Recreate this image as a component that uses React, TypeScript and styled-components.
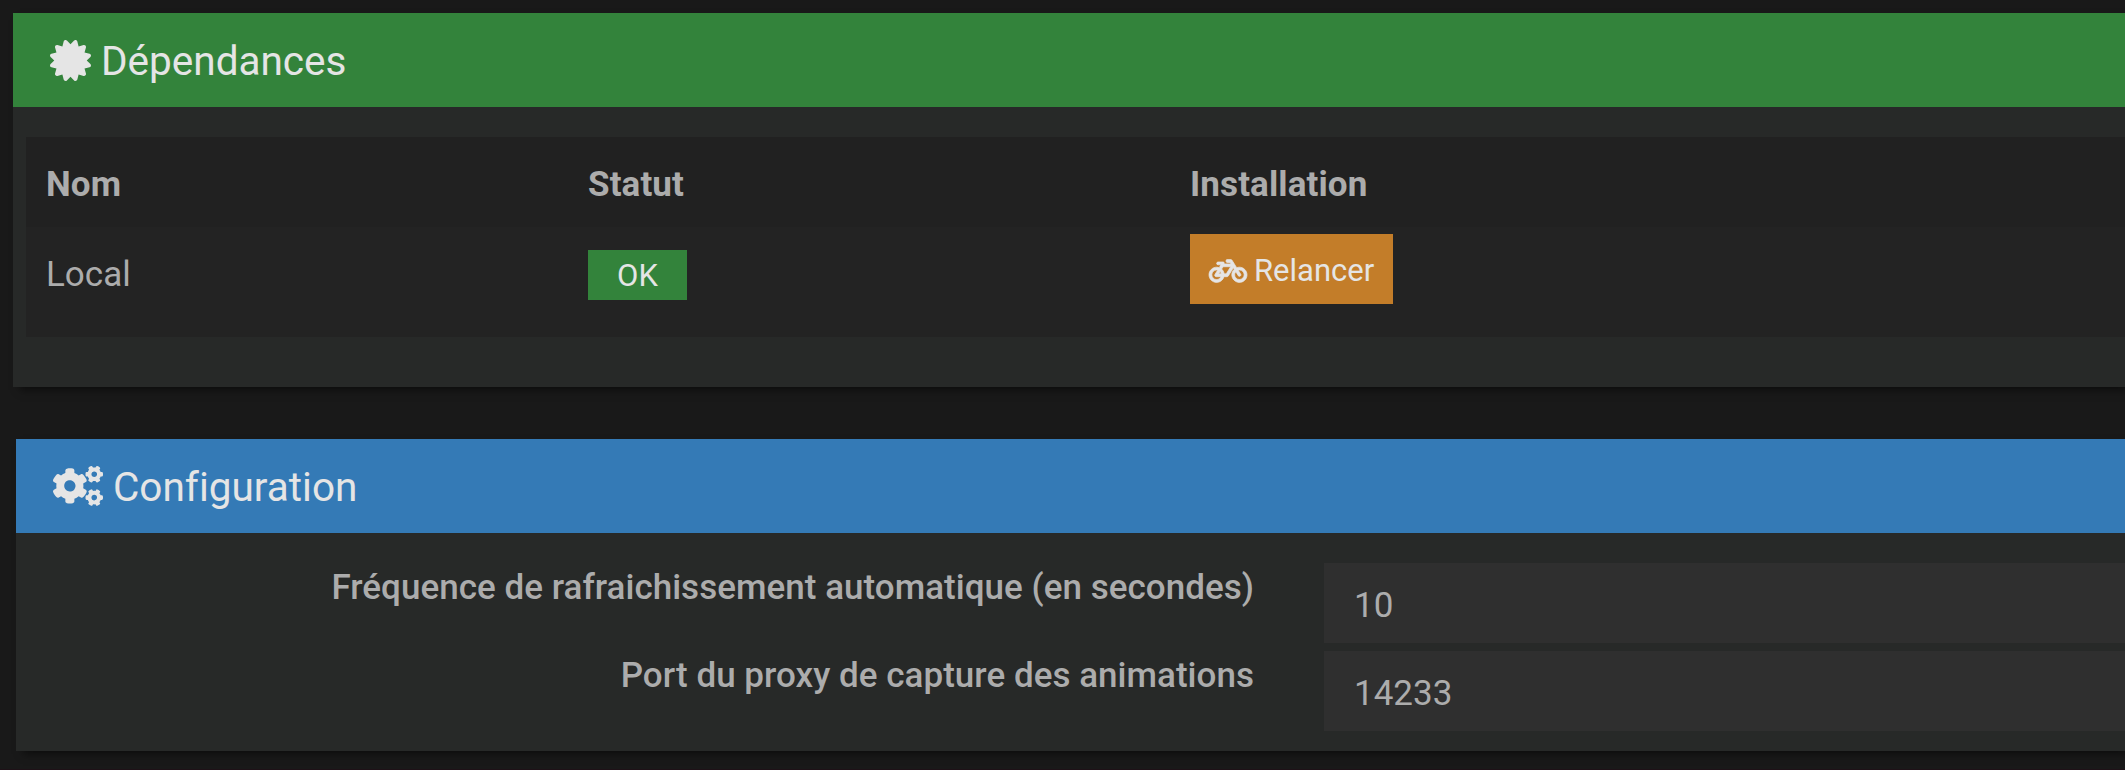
import React from "react";
import styled, { createGlobalStyle } from "styled-components";
import { FaBicycle, FaCertificate, FaCogs } from "react-icons/fa";

const GlobalStyle = createGlobalStyle`
  * { box-sizing: border-box; }
  body {
    margin: 0;
    background: #191919;
    color: #acacac;
    font-family: Roboto, "Liberation Sans", sans-serif;
    font-size: 35px;
    line-height: 50px;
    font-variant-ligatures: none;
    overflow: hidden;
  }
`;

const Page = styled.main`
  display: flex;
  flex-direction: column;
  gap: 52px;
  height: 770px;
  padding-top: 13px;
  border-bottom: 1px solid #1e1117;
  overflow: hidden;
`;

const Panel = styled.section<{ $indent: number; $height: number }>`
  flex: none;
  height: ${(p) => p.$height}px;
  margin-left: ${(p) => p.$indent}px;
  background: #272928;
  box-shadow: 5px 5px 8px -2px rgba(0, 0, 0, 0.5);
`;

const PanelHeader = styled.h3<{ $color: string }>`
  display: flex;
  align-items: center;
  gap: 10px;
  height: 94px;
  margin: 0;
  padding: 0 37px;
  background: ${(p) => p.$color};
  color: #e5e5e5;
  font-size: 40.5px;
  font-weight: 400;

  span { padding-top: 1px; }
`;

const Table = styled.div`
  margin: 30px 0 0 13px;
  background: #232323;
`;

const Row = styled.div<{ $head?: boolean }>`
  display: grid;
  grid-template-columns: 542px 602px 1fr;
  align-items: start;
  height: ${(p) => (p.$head ? 90 : 110)}px;
  padding-left: 20px;
  background: ${(p) => (p.$head ? "#212121" : "#232323")};
  font-weight: ${(p) => (p.$head ? 700 : 400)};
  letter-spacing: ${(p) => (p.$head ? "0.1px" : "normal")};
`;

const Cell = styled.div<{ $top: number }>`
  padding-top: ${(p) => p.$top}px;
`;

const Badge = styled.span`
  display: block;
  width: 99px;
  height: 50px;
  background: #33833b;
  color: #e5e5e5;
  font-size: 31px;
  line-height: 51px;
  text-align: center;
`;

const Button = styled.button`
  display: flex;
  align-items: center;
  gap: 7px;
  width: 203px;
  height: 70px;
  padding: 3px 0 0 19px;
  border: 0;
  background: #c37d29;
  color: #e5e5e5;
  font: 400 31px/70px Roboto, sans-serif;

  svg {
    overflow: visible;
    stroke: currentColor;
    stroke-width: 12;
  }
`;

const Form = styled.form`
  display: flex;
  flex-direction: column;
  gap: 8px;
  padding-top: 30px;
`;

const Field = styled.label`
  display: grid;
  grid-template-columns: 1238px 1fr;
  column-gap: 70px;
  height: 80px;
`;

const FieldName = styled.span`
  line-height: 50px;
  font-weight: 500;
  letter-spacing: 0.025px;
  text-align: right;
`;

const Input = styled.input`
  width: 100%;
  height: 80px;
  padding: 5px 30px 0;
  border: 0;
  border-radius: 0;
  outline: 0;
  background: #2f2f2f;
  color: #acacac;
  font: 400 35px Roboto, sans-serif;
`;

export default function App() {
  return (
    <>
      <GlobalStyle />
      <Page>
        <Panel $indent={13} $height={374}>
          <PanelHeader $color="#33833b">
            <FaCertificate size={41} />
            <span>Dépendances</span>
          </PanelHeader>
          <Table>
            <Row $head>
              <Cell $top={23}>Nom</Cell>
              <Cell $top={23}>Statut</Cell>
              <Cell $top={23}>Installation</Cell>
            </Row>
            <Row>
              <Cell $top={23}>Local</Cell>
              <Cell $top={23}>
                <Badge>OK</Badge>
              </Cell>
              <Cell $top={7}>
                <Button type="button">
                  <FaBicycle size={38} />
                  Relancer
                </Button>
              </Cell>
            </Row>
          </Table>
        </Panel>
        <Panel $indent={16} $height={312}>
          <PanelHeader $color="#347ab6">
            <FaCogs size={50} />
            <span>Configuration</span>
          </PanelHeader>
          <Form>
            <Field>
              <FieldName>Fréquence de rafraichissement automatique (en secondes)</FieldName>
              <Input defaultValue="10" />
            </Field>
            <Field>
              <FieldName>Port du proxy de capture des animations</FieldName>
              <Input defaultValue="14233" />
            </Field>
          </Form>
        </Panel>
      </Page>
    </>
  );
}
